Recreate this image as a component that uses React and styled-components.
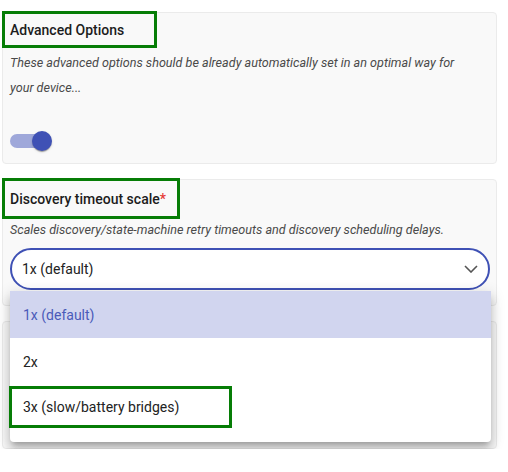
import React, { useState } from "react";
import styled, { createGlobalStyle } from "styled-components";

const GlobalStyle = createGlobalStyle`
  body {
    margin: 0;
    background: #ffffff;
    font-family: Roboto, "Liberation Sans", Arial, sans-serif;
  }
`;

const Page = styled.div`
  display: flex;
  flex-direction: column;
  gap: 15px;
  padding: 12px 11px 0 2px;
`;

const Card = styled.div`
  position: relative;
  background: #f9f9f9;
  border: 1px solid #ebebeb;
  border-radius: 4px;
  padding: 1px 7px ${(p) => p.$pb || 0}px 7px;
  min-height: ${(p) => p.$minH || 0}px;
`;

const Title = styled.div`
  display: inline-block;
  box-sizing: border-box;
  width: ${(p) => p.$w}px;
  height: ${(p) => p.$h}px;
  line-height: ${(p) => p.$h - 2}px;
  margin-left: -5px;
  padding: 2px 5px 0;
  font-size: 14px;
  font-weight: 500;
  color: #1c1c1c;
  outline: 3px solid #067d06;
`;

const Required = styled.span`
  color: #e53935;
`;

const Desc = styled.p`
  max-width: 462px;
  margin: ${(p) => p.$mt}px 0 0;
  font-size: 12.6px;
  line-height: 25px;
  font-style: italic;
  color: #4a4a4a;
`;

const SwitchRow = styled.div`
  display: flex;
  align-items: center;
  height: 38px;
  margin-top: 22px;
  padding-bottom: 3px;
`;

const Track = styled.div`
  position: relative;
  width: 34px;
  height: 14px;
  border-radius: 7px;
  background: #9fa8da;
`;

const Thumb = styled.div`
  position: absolute;
  top: -3px;
  left: 22px;
  width: 20px;
  height: 20px;
  border-radius: 50%;
  background: #3f51b5;
  box-shadow: 0 2px 1px -1px rgba(0, 0, 0, 0.2), 0 1px 1px 0 rgba(0, 0, 0, 0.14),
    0 1px 3px 0 rgba(0, 0, 0, 0.12);
`;

const SelectWrap = styled.div`
  position: relative;
  margin-top: 6px;
`;

const SelectBox = styled.div`
  display: flex;
  align-items: center;
  justify-content: space-between;
  box-sizing: border-box;
  width: 480px;
  height: 42px;
  padding: 0 10px 0 10px;
  background: #ffffff;
  border: 2px solid #3f51b5;
  border-radius: 21px;
  font-size: 14px;
  color: #222;
`;

const Menu = styled.ul`
  position: absolute;
  z-index: 10;
  top: 43px;
  left: 0;
  width: 481px;
  margin: 0;
  padding: 0 0 10px;
  list-style: none;
  background: #ffffff;
  border-radius: 4px;
  box-shadow: 0 5px 5px -3px rgba(0, 0, 0, 0.2), 0 8px 10px 1px rgba(0, 0, 0, 0.14),
    0 3px 14px 2px rgba(0, 0, 0, 0.12);
`;

const Item = styled.li`
  display: flex;
  align-items: center;
  height: 47px;
  padding-left: 13px;
  font-size: 14px;
  color: ${(p) => (p.$selected ? "#4a5ab9" : "#222")};
  background: ${(p) => (p.$selected ? "#d1d5ef" : "#ffffff")};
`;

const Marked = styled.span`
  display: inline-block;
  box-sizing: border-box;
  width: 217px;
  height: 36px;
  line-height: 36px;
  margin-left: -11px;
  margin-top: -3px;
  padding-left: 11px;
  outline: 3px solid #067d06;
`;

const options = ["1x (default)", "2x", "3x (slow/battery bridges)"];

export default function App() {
  const [value] = useState(options[0]);

  return (
    <>
      <GlobalStyle />
      <Page>
        <Card>
          <Title $w={149} $h={31}>Advanced Options</Title>
          <Desc $mt={5}>
            These advanced options should be already automatically set in an optimal way for
            your device...
          </Desc>
          <SwitchRow>
            <Track>
              <Thumb />
            </Track>
          </SwitchRow>
        </Card>

        <Card $pb={15}>
          <Title $w={172} $h={35}>
            Discovery timeout scale<Required>*</Required>
          </Title>
          <Desc $mt={1}>
            Scales discovery/state-machine retry timeouts and discovery scheduling delays.
          </Desc>
          <SelectWrap>
            <SelectBox>
              <span>{value}</span>
              <svg width="14" height="8" viewBox="0 0 14 8">
                <path d="M1 1l6 6 6-6" fill="none" stroke="#555" strokeWidth="1.6" />
              </svg>
            </SelectBox>
            <Menu>
              {options.map((o, i) => (
                <Item key={o} $selected={o === value}>
                  {i === 2 ? <Marked>{o}</Marked> : o}
                </Item>
              ))}
            </Menu>
          </SelectWrap>
        </Card>

        <Card $minH={125} />
      </Page>
    </>
  );
}
